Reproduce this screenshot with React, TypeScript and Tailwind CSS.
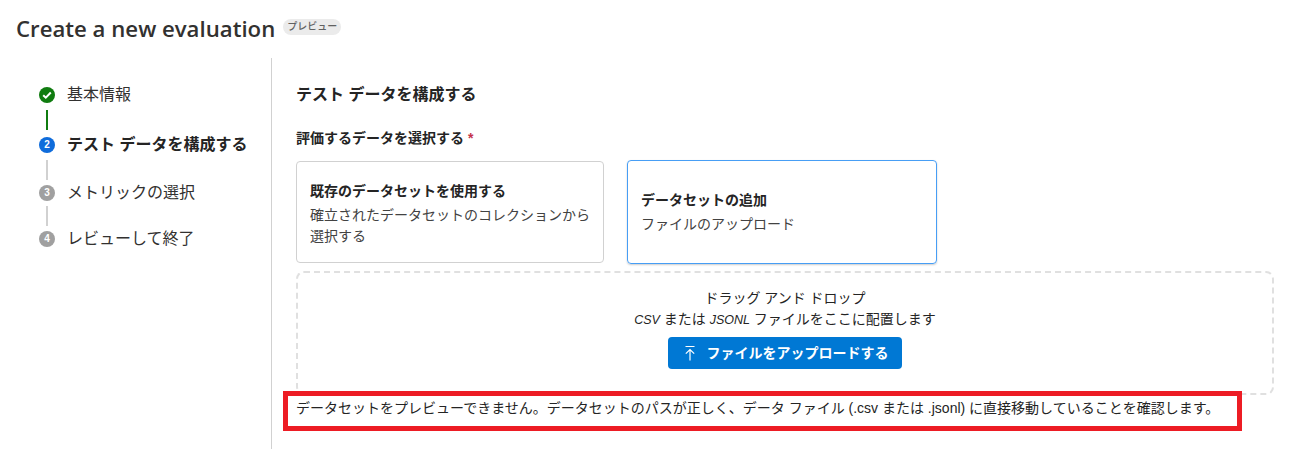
import React from "react";

function Dot({ n, color }: { n: string; color: string }) {
  return (
    <span className={`flex h-4 w-4 shrink-0 items-center justify-center rounded-full text-[10px] font-bold leading-none text-white ${color}`}>
      {n}
    </span>
  );
}

function StepRow({ icon, label, bold }: { icon: React.ReactNode; label: string; bold?: boolean }) {
  return (
    <div className="flex h-[20px] items-center gap-[12px] pl-[39px]">
      {icon}
      <span className={`whitespace-nowrap text-[16px] leading-[20px] ${bold ? "font-bold text-[#242424]" : "text-[#323130]"}`}>{label}</span>
    </div>
  );
}

export default function App() {
  return (
    <div className="relative h-[455px] w-[1299px] overflow-hidden bg-white font-['Liberation_Sans','Noto_Sans_CJK_JP',sans-serif] text-[#242424]">
      <header className="flex h-[58px] items-start pl-[16px] pt-[14px]">
        <h1 className="whitespace-nowrap font-['Open_Sans','Noto_Sans_CJK_JP',sans-serif] text-[22.2px] font-semibold leading-[30px] text-[#323130]">Create a new evaluation</h1>
        <span className="ml-[8px] mt-[5px] flex h-[16px] items-center rounded-full bg-[#ebebeb] px-[4px] text-[10px] font-medium leading-none text-[#616161]">プレビュー</span>
      </header>
      <div className="flex">
        <nav className="h-[391px] w-[272px] shrink-0 border-r border-[#d1d1d1] pt-[27px]">
          <StepRow
            label="基本情報"
            icon={
              <svg className="h-4 w-4 shrink-0" viewBox="0 0 16 16">
                <circle cx="8" cy="8" r="8" fill="#107c10" />
                <path d="M4.2 8.2l2.6 2.5 5-5.2" fill="none" stroke="#fff" strokeWidth="2" />
              </svg>
            }
          />
          <div className="ml-[46px] mt-[5px] h-[20px] w-[2px] bg-[#107c10]" />
          <div className="mt-[5px]">
            <StepRow label="テスト データを構成する" bold icon={<Dot n="2" color="bg-[#0f6cdb]" />} />
          </div>
          <div className="ml-[46px] mt-[5px] h-[20px] w-[2px] bg-[#d1d1d1]" />
          <div className="mt-[3px]">
            <StepRow label="メトリックの選択" icon={<Dot n="3" color="bg-[#a0a0a0]" />} />
          </div>
          <div className="ml-[46px] mt-[3px] h-[20px] w-[2px] bg-[#d1d1d1]" />
          <div className="mt-[3px]">
            <StepRow label="レビューして終了" icon={<Dot n="4" color="bg-[#a0a0a0]" />} />
          </div>
        </nav>
        <main className="flex-1 pl-[24px] pr-[25px] pt-[26px]">
          <h2 className="text-[16px] font-bold leading-[22px] text-[#242424]">テスト データを構成する</h2>
          <div className="mt-[22px] text-[14px] font-semibold leading-[20px]">
            評価するデータを選択する <span className="text-[#c4314b]">*</span>
          </div>
          <div className="mt-[13px] flex items-start gap-[23px]">
            <div className="flex h-[102px] w-[308px] flex-col justify-center rounded-[4px] border border-[#d1d1d1] pl-[13px] pr-[10px] pt-[3px]">
              <div className="text-[14px] font-bold leading-[20px] text-[#242424]">既存のデータセットを使用する</div>
              <div className="mt-[4px] text-[14px] leading-[21px] text-[#424242]">確立されたデータセットのコレクションから選択する</div>
            </div>
            <div className="flex h-[104px] w-[310px] -translate-y-[1px] flex-col justify-center rounded-[4px] border border-[#479ef5] px-[13px] pt-[1px] shadow-[0_1px_2px_rgba(0,0,0,0.2)]">
              <div className="text-[14px] font-bold leading-[20px] text-[#242424]">データセットの追加</div>
              <div className="mt-[4px] text-[14px] leading-[21px] text-[#424242]">ファイルのアップロード</div>
            </div>
          </div>
          <div className="mt-[6px] flex h-[124px] w-[978px] flex-col items-center rounded-[8px] border-2 border-dashed border-[#e0e0e0] pt-[15px]">
            <div className="text-[14px] leading-[20px] text-[#242424]">ドラッグ アンド ドロップ</div>
            <div className="mt-[1px] text-[14px] leading-[20px] text-[#242424]">
              <i className="text-[12.5px]">CSV</i> または <i className="text-[12.5px]">JSONL</i> ファイルをここに配置します
            </div>
            <button className="mt-[7px] flex h-[32px] w-[234px] items-center justify-center gap-[9px] rounded-[4px] bg-[#0078d4] text-[14px] font-semibold text-white">
              <svg className="h-4 w-4" viewBox="0 0 16 16" fill="none" stroke="currentColor" strokeWidth="1.2">
                <path d="M3.5 1.5h9M8 15.5V4.5M3.8 8.7L8 4.5l4.2 4.2" />
              </svg>
              ファイルをアップロードする
            </button>
          </div>
          <p className="mt-[1px] whitespace-nowrap text-[14px] leading-[24px] text-[#242424]">データセットをプレビューできません。データセットのパスが正しく、データ ファイル (.csv または .jsonl) に直接移動していることを確認します。</p>
        </main>
      </div>
      <div className="pointer-events-none absolute left-[283px] top-[391px] h-[40px] w-[959px] border-[5px] border-[#ed1c24]" />
    </div>
  );
}
